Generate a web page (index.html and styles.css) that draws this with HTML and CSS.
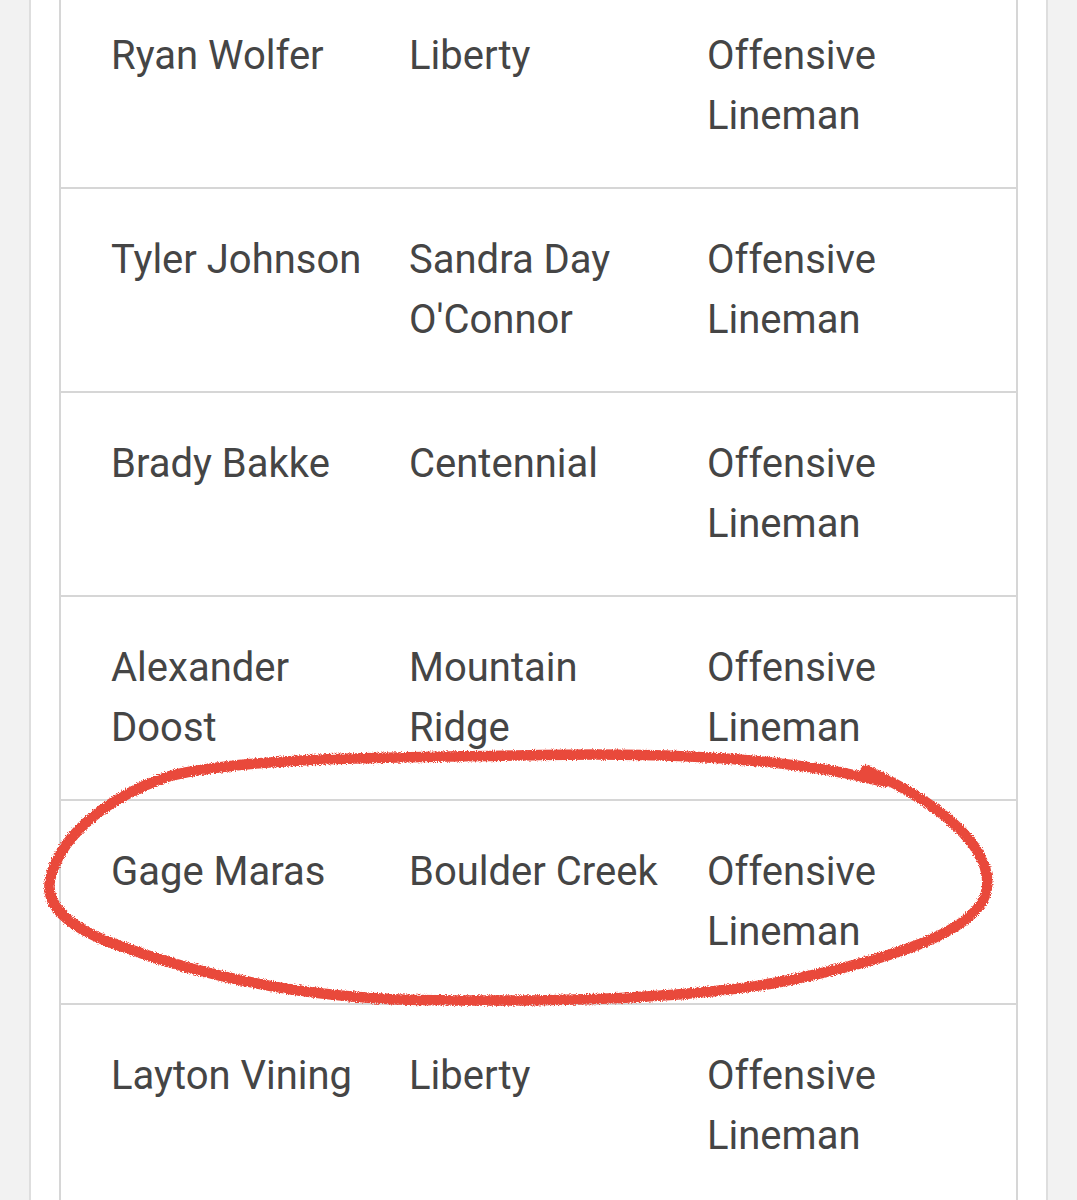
FILE: index.html
```html
<!DOCTYPE html>
<html lang="en">
<head>
<meta charset="utf-8">
<title>Roster</title>
<link rel="stylesheet" href="styles.css">
</head>
<body>
<div class="page">
  <div class="table">
    <div class="row first">
      <div class="cell">Ryan Wolfer</div>
      <div class="cell">Liberty</div>
      <div class="cell">Offensive Lineman</div>
    </div>
    <div class="row">
      <div class="cell">Tyler Johnson</div>
      <div class="cell">Sandra Day O'Connor</div>
      <div class="cell">Offensive Lineman</div>
    </div>
    <div class="row">
      <div class="cell">Brady Bakke</div>
      <div class="cell">Centennial</div>
      <div class="cell">Offensive Lineman</div>
    </div>
    <div class="row">
      <div class="cell">Alexander Doost</div>
      <div class="cell">Mountain Ridge</div>
      <div class="cell">Offensive Lineman</div>
    </div>
    <div class="row">
      <div class="cell">Gage Maras</div>
      <div class="cell">Boulder Creek</div>
      <div class="cell">Offensive Lineman</div>
    </div>
    <div class="row">
      <div class="cell">Layton Vining</div>
      <div class="cell">Liberty</div>
      <div class="cell">Offensive Lineman</div>
    </div>
  </div>
</div>
<svg class="mark" width="1077" height="1200" viewBox="0 0 1077 1200" aria-hidden="true">
  <defs>
    <filter id="rough" x="-5%" y="-5%" width="110%" height="110%">
      <feTurbulence type="fractalNoise" baseFrequency="0.9" numOctaves="2" seed="3" result="n"/>
      <feDisplacementMap in="SourceGraphic" in2="n" scale="4.5" xChannelSelector="R" yChannelSelector="G"/>
    </filter>
  </defs>
  <path filter="url(#rough)" fill="none" stroke="#e9483b" stroke-width="10.5" stroke-linecap="round" stroke-linejoin="round"
    d="M 866 770 C 935 800, 992 845, 987 888 C 982 928, 905 955, 800 978 C 700 1000, 550 1002, 420 1000 C 300 998, 200 975, 120 946 C 62 926, 46 902, 50 880 C 58 842, 98 800, 170 776 C 250 756, 400 758, 540 755 C 680 752, 800 760, 884 782"/>
</svg>
</body>
</html>
```
FILE: styles.css
```css
html, body {
  margin: 0;
  padding: 0;
}
body {
  background: #f2f2f2;
  width: 1077px;
  height: 1200px;
  overflow: hidden;
  position: relative;
  font-family: Roboto, "Noto Sans", sans-serif;
}
.page {
  margin-left: 29px;
  width: 959px;
  height: 1200px;
  background: #ffffff;
  border-left: 2px solid #dedede;
  border-right: 2px solid #dedede;
  padding: 0 28px;
  box-sizing: content-box;
}
.table {
  border-left: 2px solid #d6d6d6;
  border-right: 2px solid #d6d6d6;
  height: 1200px;
}
.row {
  display: grid;
  grid-template-columns: 298px 298px 1fr;
  padding: 41px 0;
  border-top: 2px solid #d6d6d6;
}
.row.first {
  padding-top: 26px;
  border-top: none;
}
.cell {
  padding-left: 50px;
  margin-right: -10px;
  font-size: 40px;
  line-height: 60px;
  color: #454545;
}
.mark {
  position: absolute;
  left: 0;
  top: 0;
  pointer-events: none;
}
```
